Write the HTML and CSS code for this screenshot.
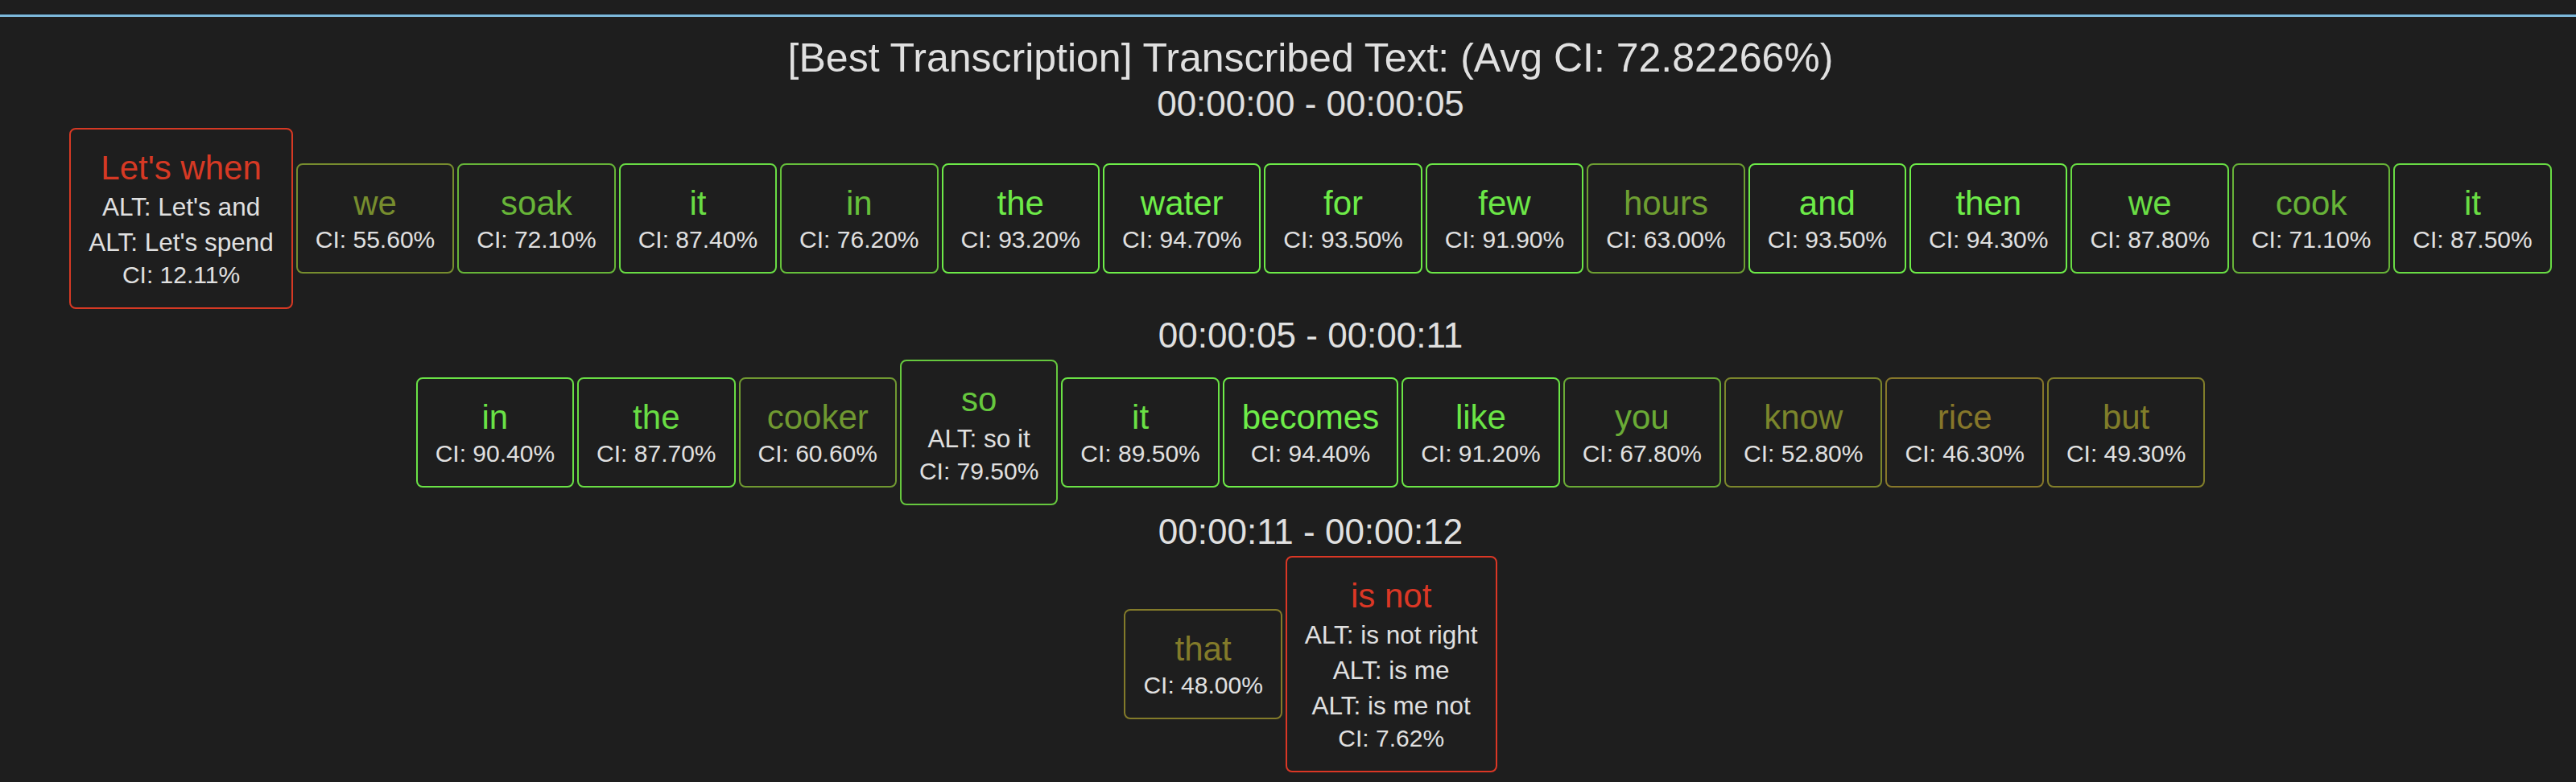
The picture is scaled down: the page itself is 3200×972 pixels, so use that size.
FILE: index.html
```html
<!DOCTYPE html>
<html lang="en">
<head>
<meta charset="utf-8">
<title>Transcription</title>
<link rel="stylesheet" href="styles.css">
</head>
<body>
<div class="topbar"></div>
<main class="transcript">
  <h1 class="title">[Best Transcription] Transcribed Text: (Avg CI: 72.82266%)</h1>

  <section class="segment">
    <div class="time">00:00:00 - 00:00:05</div>
    <div class="words">
      <div class="word" style="--c:#d63924"><div class="text">Let's when</div><div class="alt">ALT: Let's and</div><div class="alt">ALT: Let's spend</div><div class="ci">CI: 12.11%</div></div>
      <div class="word" style="--c:#778d2e"><div class="text">we</div><div class="ci">CI: 55.60%</div></div>
      <div class="word" style="--c:#67b538"><div class="text">soak</div><div class="ci">CI: 72.10%</div></div>
      <div class="word" style="--c:#69dc44"><div class="text">it</div><div class="ci">CI: 87.40%</div></div>
      <div class="word" style="--c:#66c03b"><div class="text">in</div><div class="ci">CI: 76.20%</div></div>
      <div class="word" style="--c:#6dea48"><div class="text">the</div><div class="ci">CI: 93.20%</div></div>
      <div class="word" style="--c:#6eee49"><div class="text">water</div><div class="ci">CI: 94.70%</div></div>
      <div class="word" style="--c:#6deb48"><div class="text">for</div><div class="ci">CI: 93.50%</div></div>
      <div class="word" style="--c:#6ce747"><div class="text">few</div><div class="ci">CI: 91.90%</div></div>
      <div class="word" style="--c:#6e9f32"><div class="text">hours</div><div class="ci">CI: 63.00%</div></div>
      <div class="word" style="--c:#6deb48"><div class="text">and</div><div class="ci">CI: 93.50%</div></div>
      <div class="word" style="--c:#6eed49"><div class="text">then</div><div class="ci">CI: 94.30%</div></div>
      <div class="word" style="--c:#69dd44"><div class="text">we</div><div class="ci">CI: 87.80%</div></div>
      <div class="word" style="--c:#67b338"><div class="text">cook</div><div class="ci">CI: 71.10%</div></div>
      <div class="word" style="--c:#69dc44"><div class="text">it</div><div class="ci">CI: 87.50%</div></div>
    </div>
  </section>

  <section class="segment">
    <div class="time">00:00:05 - 00:00:11</div>
    <div class="words">
      <div class="word" style="--c:#6ae246"><div class="text">in</div><div class="ci">CI: 90.40%</div></div>
      <div class="word" style="--c:#69dd44"><div class="text">the</div><div class="ci">CI: 87.70%</div></div>
      <div class="word" style="--c:#709931"><div class="text">cooker</div><div class="ci">CI: 60.60%</div></div>
      <div class="word" style="--c:#66c83e"><div class="text">so</div><div class="alt">ALT: so it</div><div class="ci">CI: 79.50%</div></div>
      <div class="word" style="--c:#6ae145"><div class="text">it</div><div class="ci">CI: 89.50%</div></div>
      <div class="word" style="--c:#6eed49"><div class="text">becomes</div><div class="ci">CI: 94.40%</div></div>
      <div class="word" style="--c:#6be546"><div class="text">like</div><div class="ci">CI: 91.20%</div></div>
      <div class="word" style="--c:#6aab36"><div class="text">you</div><div class="ci">CI: 67.80%</div></div>
      <div class="word" style="--c:#7b862c"><div class="text">know</div><div class="ci">CI: 52.80%</div></div>
      <div class="word" style="--c:#86772a"><div class="text">rice</div><div class="ci">CI: 46.30%</div></div>
      <div class="word" style="--c:#817e2a"><div class="text">but</div><div class="ci">CI: 49.30%</div></div>
    </div>
  </section>

  <section class="segment">
    <div class="time">00:00:11 - 00:00:12</div>
    <div class="words">
      <div class="word" style="--c:#837b2a"><div class="text">that</div><div class="ci">CI: 48.00%</div></div>
      <div class="word" style="--c:#db3725"><div class="text">is not</div><div class="alt">ALT: is not right</div><div class="alt">ALT: is me</div><div class="alt">ALT: is me not</div><div class="ci">CI: 7.62%</div></div>
    </div>
  </section>
</main>
</body>
</html>
```

FILE: styles.css
```css
html, body {
  margin: 0;
  padding: 0;
  background: #1e1e1e;
}

body {
  font-family: "Liberation Sans", Arial, Helvetica, sans-serif;
  color: #e0e0e0;
}

.topbar {
  height: 18px;
  border-bottom: 3px solid #7db8da;
  background: linear-gradient(to bottom, #1e1e1e 17px, #0d1820 17px);
}

.transcript {
  padding-left: 56px;
  padding-top: 22px;
  text-align: center;
}

.title {
  margin: 0 0 4px;
  font-size: 50px;
  line-height: 58px;
  font-weight: 400;
  color: #e0e0e0;
  white-space: nowrap;
}

.time {
  font-size: 44px;
  line-height: 48px;
  color: #e0e0e0;
  white-space: nowrap;
}

.words {
  display: flex;
  justify-content: center;
  align-items: center;
  gap: 4px;
  margin: 6px 0 9px;
}

.word {
  flex: none;
  border: 2px solid var(--c);
  border-radius: 8px;
  padding: 21.5px 22px;
  white-space: nowrap;
}

.text {
  color: var(--c);
  font-size: 42px;
  line-height: 52.5px;
}

.alt {
  font-size: 31.5px;
  line-height: 44px;
  color: #e0e0e0;
}

.ci {
  font-size: 30px;
  line-height: 37.5px;
  color: #e0e0e0;
}
```
